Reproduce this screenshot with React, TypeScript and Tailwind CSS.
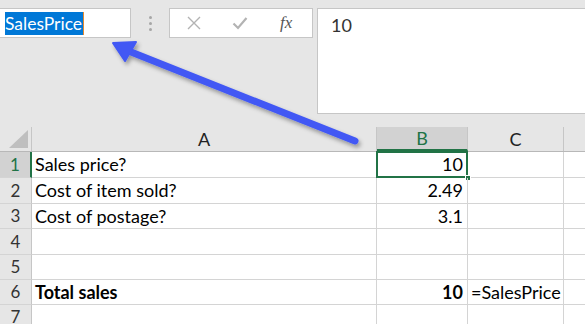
import React from 'react';

const FONT = 'font-["Lato","Liberation_Sans",sans-serif]';

const COLS = [
    { key: 'A', w: 'w-[345px]' },
    { key: 'B', w: 'w-[91px]' },
    { key: 'C', w: 'w-[96px]' },
];

interface Row {
    n: number;
    h: string;
    a?: string;
    b?: string;
    c?: string;
    bold?: boolean;
}

const ROWS: Row[] = [
    { n: 1, h: 'h-[26px]', a: 'Sales price?', b: '10' },
    { n: 2, h: 'h-[26px]', a: 'Cost of item sold?', b: '2.49' },
    { n: 3, h: 'h-[25px]', a: 'Cost of postage?', b: '3.1' },
    { n: 4, h: 'h-[26px]' },
    { n: 5, h: 'h-[25px]' },
    { n: 6, h: 'h-[25px]', a: 'Total sales', b: '10', c: '=SalesPrice', bold: true },
    { n: 7, h: 'h-[25px]' },
];

const Arrow = () => (
    <svg className="absolute left-0 top-0 pointer-events-none" width={585} height={324}>
        <defs>
            <filter id="sh" x="-10%" y="-10%" width="130%" height="140%">
                <feDropShadow dx="2" dy="3" stdDeviation="2" floodColor="#000" floodOpacity="0.35" />
            </filter>
        </defs>
        <g filter="url(#sh)">
            <line x1={355} y1={141} x2={126} y2={50} stroke="#4259f4" strokeWidth={7} strokeLinecap="round" />
            <polygon points="113,43 136,42 125,61" fill="#4259f4" stroke="#4259f4" strokeWidth={2} strokeLinejoin="round" />
        </g>
    </svg>
);

export default function App() {
    return (
        <div className={`relative w-[585px] h-[324px] overflow-hidden bg-[#e6e6e6] ${FONT}`}>
            {/* Formula bar */}
            <div className="flex items-start pt-[8px] h-[127px]">
                <div className="w-[131px] h-[30px] bg-white border border-l-0 border-[#c6c6c6] flex items-center pl-[5px]">
                    <span className="bg-[#0078d7] text-white text-[17.5px] leading-[23px] pr-[1px] border-r border-[#e58a2e]">SalesPrice</span>
                </div>
                <div className="w-[38px] h-[30px] flex flex-col items-center justify-center gap-[3px]">
                    <span className="w-[3px] h-[3px] rounded-full bg-[#a6a6a6]" />
                    <span className="w-[3px] h-[3px] rounded-full bg-[#a6a6a6]" />
                    <span className="w-[3px] h-[3px] rounded-full bg-[#a6a6a6]" />
                </div>
                <div className="w-[144px] h-[30px] bg-white border border-[#c6c6c6] flex items-center">
                    <svg className="ml-[17px]" width={14} height={14} viewBox="0 0 14 14">
                        <path d="M1 1 L13 13 M13 1 L1 13" stroke="#b3b3b3" strokeWidth={1.4} />
                    </svg>
                    <svg className="ml-[31px]" width={16} height={14} viewBox="0 0 16 14">
                        <path d="M1.5 7.5 L6 12 L14.5 2" stroke="#b3b3b3" strokeWidth={2.2} fill="none" />
                    </svg>
                    <span className="ml-[32px] text-[17px] italic text-[#555] font-['Liberation_Serif',serif]">fx</span>
                </div>
                <div className="ml-[4px] flex-1 h-[106px] bg-white border border-r-0 border-[#c6c6c6] pl-[13px] pt-[3px] text-[18px] text-[#333]">
                    10
                </div>
            </div>

            {/* Column headers */}
            <div className="flex h-[25px] border-b border-[#b8b8b8]">
                <div className="w-[32px] relative border-r border-[#c6c6c6]">
                    <div className="absolute right-[3px] bottom-[3px] w-0 h-0 border-l-[19px] border-l-transparent border-b-[18px] border-b-[#bfbfbf]" />
                </div>
                {COLS.map(c => (
                    <div key={c.key}
                        className={`${c.w} flex items-center justify-center text-[18px] border-r border-[#c6c6c6] ${c.key === 'B' ? 'bg-[#d2d2d2] text-[#217346] border-b-2 border-b-[#217346]' : 'text-[#222]'}`}>
                        {c.key}
                    </div>
                ))}
                <div className="flex-1" />
            </div>

            {/* Rows */}
            {ROWS.map(r => (
                <div key={r.n} className={`flex ${r.h} bg-white`}>
                    <div className={`w-[32px] shrink-0 flex items-center justify-center text-[17px] border-b border-[#d4d4d4] ${r.n === 1 ? 'bg-[#d2d2d2] text-[#217346] border-r-2 border-r-[#217346]' : 'bg-[#e6e6e6] text-[#333] border-r border-r-[#c6c6c6]'}`}>
                        {r.n}
                    </div>
                    <div className={`w-[345px] shrink-0 flex items-center pl-[3px] text-[18px] text-black border-r border-b border-[#d4d4d4] ${r.bold ? 'font-bold' : ''}`}>
                        {r.a}
                    </div>
                    <div className={`relative w-[91px] shrink-0 flex items-center justify-end pr-[4px] text-[18px] text-black border-r border-b border-[#d4d4d4] ${r.bold ? 'font-bold' : ''}`}>
                        {r.b}
                        {r.n === 1 && (
                            <>
                                <div className="absolute -left-[1px] -top-[1px] -right-[1px] -bottom-[1px] border-2 border-[#217346]" />
                                <div className="absolute -right-[4px] -bottom-[4px] w-[6px] h-[6px] bg-[#217346] border border-white" />
                            </>
                        )}
                    </div>
                    <div className="w-[96px] shrink-0 flex items-center pl-[3px] text-[18px] text-black border-r border-b border-[#d4d4d4]">
                        {r.c}
                    </div>
                    <div className="flex-1 border-b border-[#d4d4d4]" />
                </div>
            ))}

            <Arrow />
        </div>
    );
}
